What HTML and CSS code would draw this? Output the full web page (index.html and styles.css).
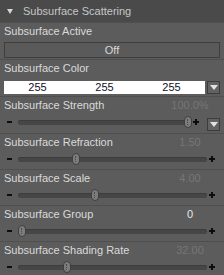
FILE: index.html
```html
<!DOCTYPE html>
<html>
<head>
<meta charset="utf-8">
<link rel="stylesheet" href="styles.css">
</head>
<body>
<div class="panel">
  <div class="header"><span class="tri"></span><span class="title">Subsurface Scattering</span></div>

  <div class="prop tall">
    <div class="label-row"><span class="label">Subsurface Active</span></div>
    <div class="toggle">Off</div>
  </div>

  <div class="prop tall">
    <div class="label-row"><span class="label">Subsurface Color</span></div>
    <div class="color-row">
      <div class="color-field"><span>255</span><span>255</span><span>255</span></div>
      <div class="drop"><span class="dtri"></span></div>
    </div>
  </div>

  <div class="prop tall">
    <div class="label-row"><span class="label">Subsurface Strength</span><span class="value dim">100.0%</span></div>
    <div class="slider-row">
      <span class="minus"></span>
      <div class="track"><span class="knob" style="left:98.5%"></span></div>
      <svg class="plus" width="6" height="6" viewBox="0 0 6 6"><path d="M2 0h2v2h2v2h-2v2h-2v-2h-2v-2h2z" fill="#0c0c0c"/></svg>
      <div class="drop drop-slider"><span class="dtri"></span></div>
    </div>
  </div>

  <div class="prop">
    <div class="label-row"><span class="label">Subsurface Refraction</span><span class="value dim">1.50</span></div>
    <div class="slider-row">
      <span class="minus"></span>
      <div class="track"><span class="knob" style="left:30.7%"></span></div>
      <svg class="plus" width="6" height="6" viewBox="0 0 6 6"><path d="M2 0h2v2h2v2h-2v2h-2v-2h-2v-2h2z" fill="#0c0c0c"/></svg>
    </div>
  </div>

  <div class="prop">
    <div class="label-row"><span class="label">Subsurface Scale</span><span class="value dim">4.00</span></div>
    <div class="slider-row">
      <span class="minus"></span>
      <div class="track"><span class="knob" style="left:40.7%"></span></div>
      <svg class="plus" width="6" height="6" viewBox="0 0 6 6"><path d="M2 0h2v2h2v2h-2v2h-2v-2h-2v-2h2z" fill="#0c0c0c"/></svg>
    </div>
  </div>

  <div class="prop">
    <div class="label-row"><span class="label">Subsurface Group</span><span class="value">0</span></div>
    <div class="slider-row">
      <span class="minus"></span>
      <div class="track"><span class="knob" style="left:2%"></span></div>
      <svg class="plus" width="6" height="6" viewBox="0 0 6 6"><path d="M2 0h2v2h2v2h-2v2h-2v-2h-2v-2h2z" fill="#0c0c0c"/></svg>
    </div>
  </div>

  <div class="prop">
    <div class="label-row"><span class="label">Subsurface Shading Rate</span><span class="value dim">32.00</span></div>
    <div class="slider-row">
      <span class="minus"></span>
      <div class="track"><span class="knob" style="left:26%"></span></div>
      <svg class="plus" width="6" height="6" viewBox="0 0 6 6"><path d="M2 0h2v2h2v2h-2v2h-2v-2h-2v-2h2z" fill="#0c0c0c"/></svg>
    </div>
  </div>
</div>
</body>
</html>
```

FILE: styles.css
```css
* { box-sizing: border-box; }
html, body { margin: 0; padding: 0; }
body {
  background: #5c5c5c;
  font-family: "Liberation Sans", Arial, sans-serif;
  font-size: 11px;
  color: #dadada;
  width: 224px;
  height: 275px;
  overflow: hidden;
}
.panel { width: 224px; }

.header {
  height: 22px;
  background: #4a4a4a;
  display: flex;
  align-items: center;
  padding-left: 7px;
  color: #c6c6c6;
}
.tri {
  width: 0; height: 0;
  border-left: 3.5px solid transparent;
  border-right: 3.5px solid transparent;
  border-top: 5px solid #d6d6d6;
  margin-right: 10px;
  margin-top: 1px;
}

.prop {
  height: 36px;
  border-top: 1px solid #4f4f4f;
  padding: 1px 4px 0;
}
.prop.tall { height: 37px; }
.label-row {
  display: flex;
  justify-content: space-between;
  height: 14px;
  line-height: 14px;
}
.value {
  width: 52px;
  text-align: center;
  margin-right: 4px;
  color: #e6e6e6;
}
.value.dim { color: #767676; }

.toggle {
  margin-top: 4px;
  height: 16px;
  border: 1px solid #3e3e3e;
  background: #5a5a5a;
  text-align: center;
  line-height: 14px;
  color: #d8d8d8;
}

.color-row {
  display: flex;
  margin-top: 6px;
  gap: 2px;
  height: 13px;
}
.color-field {
  flex: 1;
  display: flex;
  background: #ffffff;
  color: #101028;
  line-height: 13px;
}
.color-field span { flex: 1; text-align: center; }

.drop {
  width: 13px;
  height: 13px;
  background: #626262;
  border: 1px solid #3c3c3c;
  display: flex;
  align-items: center;
  justify-content: center;
}
.dtri {
  width: 0; height: 0;
  border-left: 4px solid transparent;
  border-right: 4px solid transparent;
  border-top: 5px solid #e2e2e2;
}

.slider-row {
  display: flex;
  align-items: center;
  height: 14px;
  margin-top: 3px;
}
.minus {
  width: 5px;
  height: 2px;
  background: #0e0e0e;
  margin-left: 3px;
  margin-right: 6px;
}
.track {
  flex: 1;
  height: 5px;
  border-radius: 3px;
  background: #464646;
  box-shadow: inset 0 1px 0 #3c3c3c;
  position: relative;
}
.knob {
  position: absolute;
  top: 50%;
  width: 8px;
  height: 12px;
  margin-left: -4px;
  margin-top: -6px;
  border-radius: 4px;
  border: 1px solid #3e3e3e;
  background: #7c7c7c;
}
.knob::after {
  content: "";
  position: absolute;
  left: 2px;
  top: 2px;
  height: 6px;
  border-left: 1px dotted #4a4a4a;
}
.plus {
  margin-left: 2px;
  margin-right: 5px;
  flex: none;
}
.drop-slider {
  margin-left: 3px;
  align-self: flex-end;
  margin-bottom: -2px;
}
```
